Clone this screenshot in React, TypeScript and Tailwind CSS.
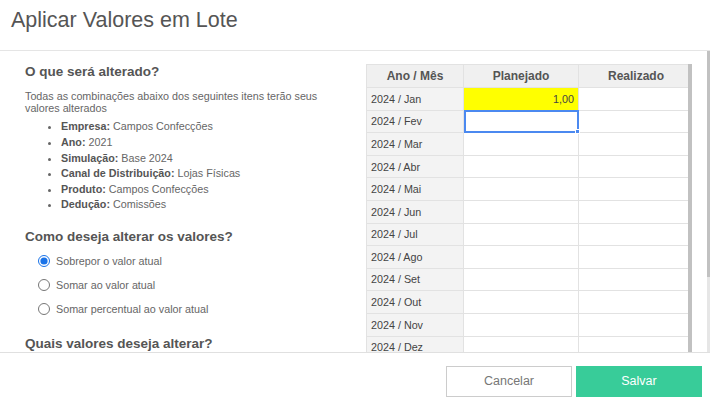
import { useState } from 'react';

const items = [
  { label: 'Empresa:', value: 'Campos Confecções' },
  { label: 'Ano:', value: '2021' },
  { label: 'Simulação:', value: 'Base 2024' },
  { label: 'Canal de Distribuição:', value: 'Lojas Físicas' },
  { label: 'Produto:', value: 'Campos Confecções' },
  { label: 'Dedução:', value: 'Comissões' },
];

const options = ['Sobrepor o valor atual', 'Somar ao valor atual', 'Somar percentual ao valor atual'];

const months = ['Jan', 'Fev', 'Mar', 'Abr', 'Mai', 'Jun', 'Jul', 'Ago', 'Set', 'Out', 'Nov', 'Dez'];

export default function App() {
  const [mode, setMode] = useState(0);

  return (
    <div className="w-[710px] h-[408px] bg-white flex flex-col overflow-hidden font-['Liberation_Sans',Arial,sans-serif]">
      {/* Header */}
      <div className="h-[51px] shrink-0 border-b border-[#e5e5e5] pl-[11px] flex items-center">
        <h1 className="text-[21.5px] leading-none text-[#555] pb-[9px]">Aplicar Valores em Lote</h1>
      </div>

      {/* Body */}
      <div className="h-[301px] shrink-0 flex overflow-hidden">
        <div className="w-[300px] ml-[25px] pt-[13px] shrink-0">
          <h2 className="text-[13.5px] leading-[16px] font-bold text-[#555]">O que será alterado?</h2>
          <p className="mt-[11px] text-[10.75px] leading-[11.7px] text-[#666]">
            Todas as combinações abaixo dos seguintes itens terão seus valores alterados
          </p>
          <ul className="mt-[5px] pl-[36px] list-disc text-[10.75px] leading-[15.6px] text-[#666] marker:text-[#666]">
            {items.map((it) => (
              <li key={it.label}>
                <span className="font-bold text-[#555]">{it.label}</span> {it.value}
              </li>
            ))}
          </ul>

          <h2 className="mt-[16px] text-[13.5px] leading-[16px] font-bold text-[#555]">Como deseja alterar os valores?</h2>
          <div className="mt-[4px] flex flex-col">
            {options.map((opt, i) => (
              <label key={opt} className="h-[24px] flex items-center pl-[13px] text-[10.75px] text-[#666]">
                <input
                  type="radio"
                  name="mode"
                  checked={mode === i}
                  onChange={() => setMode(i)}
                  className="m-0 w-[12px] h-[12px] accent-[#1a73e8]"
                />
                <span className="ml-[6px]">{opt}</span>
              </label>
            ))}
          </div>

          <h2 className="mt-[15px] text-[13.5px] leading-[16px] font-bold text-[#555]">Quais valores deseja alterar?</h2>
        </div>

        {/* Table */}
        <div className="ml-[41px] mt-[13px] w-[326px] shrink-0 flex">
          <div className="w-[322px] border-l border-t border-[#e2e2e2] text-[10.75px] text-[#444]">
            <div className="grid grid-cols-[97px_115px_110px] h-[23px] bg-[#f0f0f0] text-[12px] font-bold text-[#555]">
              <div className="flex items-center justify-center border-r border-b border-[#e2e2e2]">Ano / Mês</div>
              <div className="flex items-center justify-center border-r border-b border-[#e2e2e2]">Planejado</div>
              <div className="flex items-center justify-center border-b border-[#e2e2e2] pl-[4px]">Realizado</div>
            </div>
            {months.map((m, i) => (
              <div key={m} className="grid grid-cols-[97px_115px_110px] h-[22.6px]">
                <div className="bg-[#f3f3f3] flex items-center pl-[4px] border-r border-b border-[#e2e2e2]">
                  2024 / {m}
                </div>
                {i === 0 ? (
                  <div className="bg-[#ffff00] flex items-center justify-end pr-[4px] border-r border-b border-[#e2e2e2]">
                    1,00
                  </div>
                ) : i === 1 ? (
                  <div className="relative border-2 border-[#4b89f0] -mt-[1px] h-[23.6px]">
                    <span className="absolute -right-[3px] -bottom-[3px] w-[5px] h-[5px] bg-[#4b89f0] border border-white" />
                  </div>
                ) : (
                  <div className="border-r border-b border-[#e2e2e2]" />
                )}
                <div className="border-b border-[#e2e2e2]" />
              </div>
            ))}
          </div>
          <div className="w-[4px] bg-[#c1c1c1] h-full" />
        </div>

        <div className="ml-[15px] w-[3px] h-full flex flex-col">
          <div className="h-[226px] bg-[#c1c1c1]" />
          <div className="flex-1 bg-[#e6e6e6]" />
        </div>
      </div>

      {/* Footer */}
      <div className="flex-1 border-t border-[#e0e0e0] pt-[13px] pr-[8px] flex justify-end gap-[4px]">
        <button className="w-[126px] h-[31px] border border-[#cccccc] bg-white text-[12.5px] text-[#777]">
          Cancelar
        </button>
        <button className="w-[126px] h-[31px] bg-[#38cc99] text-[12.5px] text-white">Salvar</button>
      </div>
    </div>
  );
}
